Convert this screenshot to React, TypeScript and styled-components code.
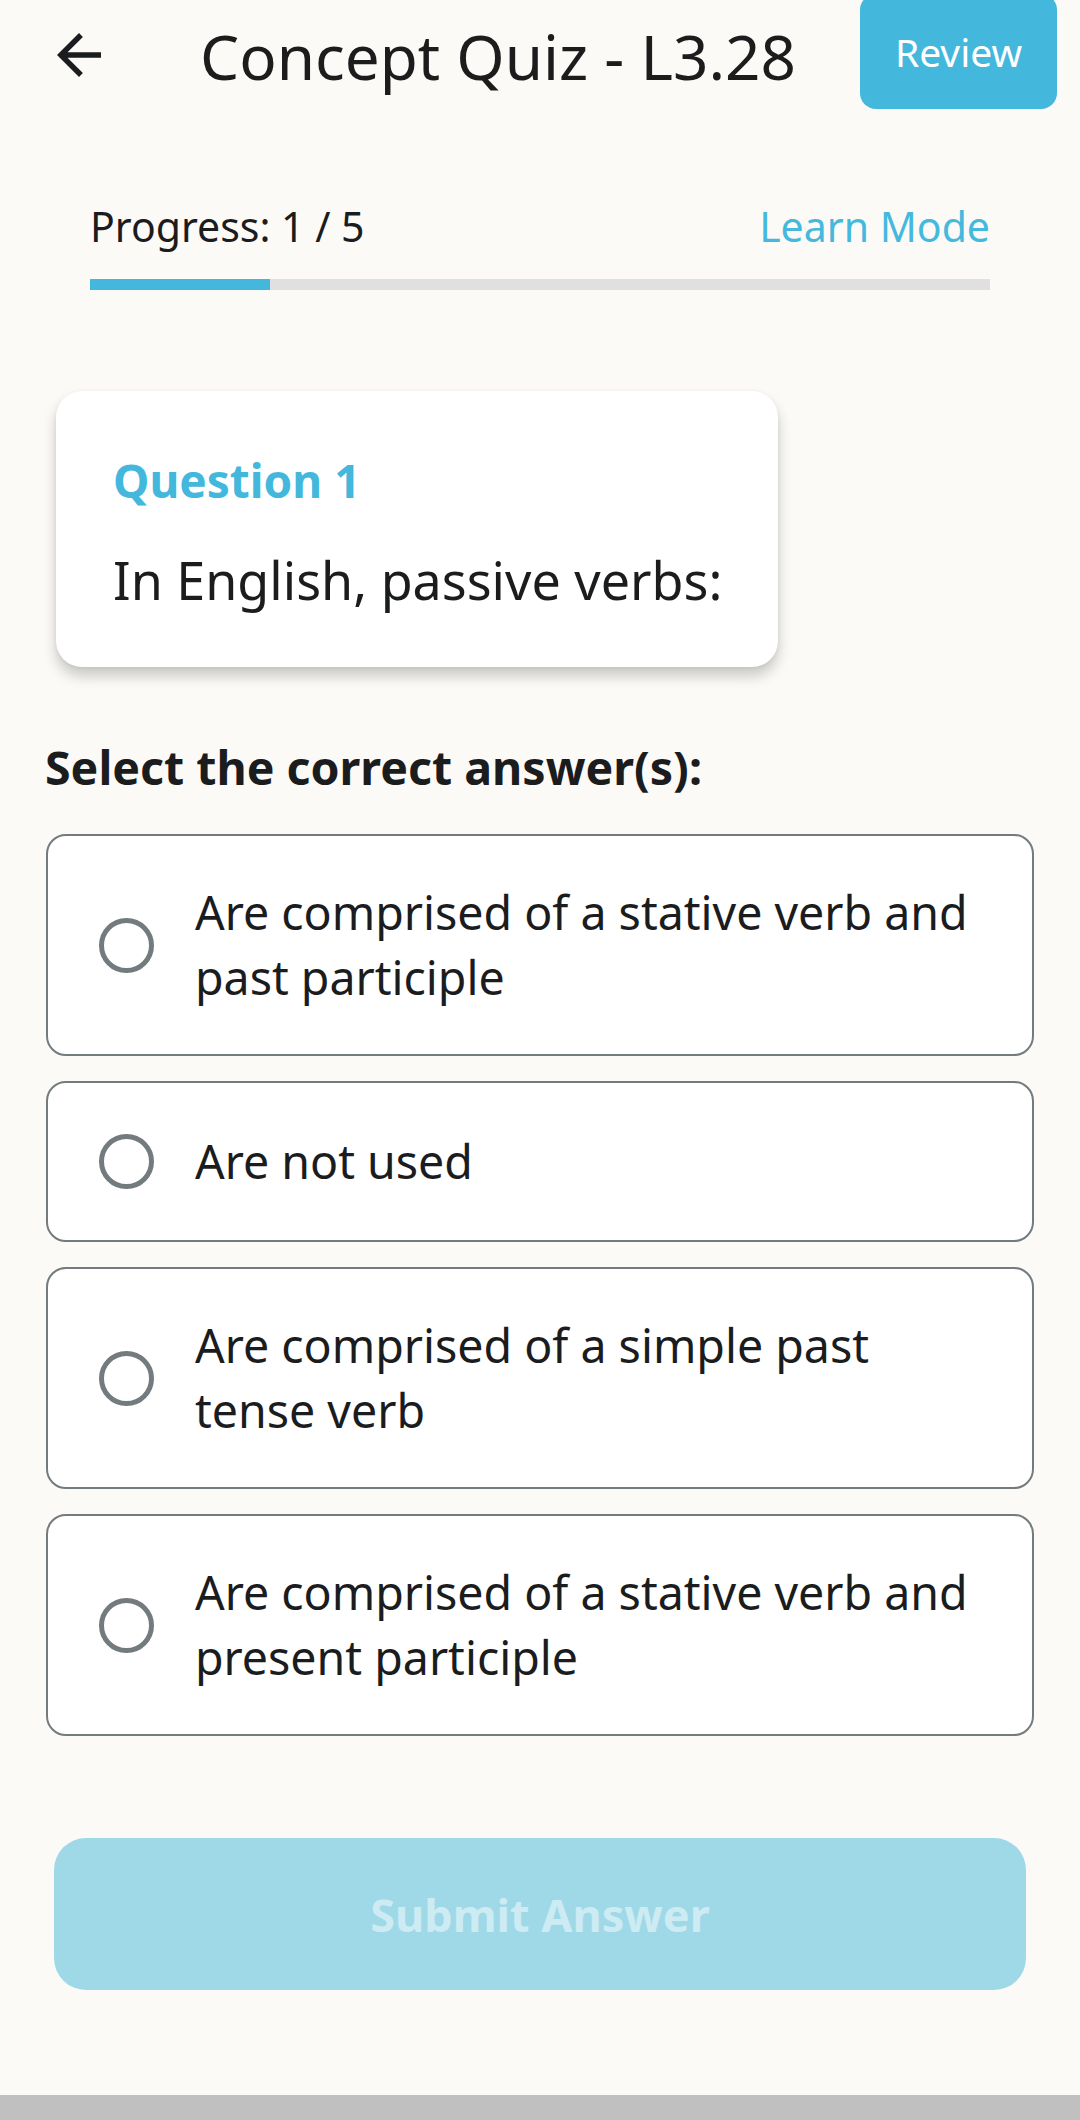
import React from "react";
import styled, { createGlobalStyle } from "styled-components";

const GlobalStyle = createGlobalStyle`
  html, body {
    margin: 0;
    padding: 0;
    background: #fbfaf6;
  }
  body {
    font-family: "Noto Sans", "Open Sans", sans-serif;
    color: #1b1c1e;
  }
  * { box-sizing: border-box; }
`;

const Page = styled.div`
  min-height: 2120px;
  display: flex;
  flex-direction: column;
  overflow: hidden;
`;

const Header = styled.header`
  height: 109px;
  display: flex;
  align-items: center;
  padding-left: 46px;
  padding-right: 23px;
`;

const BackButton = styled.button`
  width: 66px;
  height: 66px;
  padding: 0;
  border: none;
  background: transparent;
  display: flex;
  align-items: center;
  justify-content: center;
  color: #1b1c1e;
  flex-shrink: 0;
`;

const Title = styled.h1`
  flex: 1;
  margin: 0 0 0 88px;
  padding-top: 4px;
  font-size: 62px;
  font-weight: 400;
  line-height: 1.2;
  color: #1d1c1d;
  white-space: nowrap;
`;

const ReviewButton = styled.button`
  align-self: stretch;
  margin-top: -6px;
  width: 197px;
  border: none;
  border-radius: 16px;
  background: #43b8dc;
  color: #ffffff;
  font-family: "Noto Sans", sans-serif;
  font-size: 39px;
  font-weight: 400;
  padding: 0;
  flex-shrink: 0;
`;

const ProgressSection = styled.section`
  padding: 90px 90px 0;
`;

const ProgressRow = styled.div`
  display: flex;
  justify-content: space-between;
  align-items: baseline;
  font-size: 41px;
  line-height: 54px;
`;

const ProgressLabel = styled.span<{ $accent?: boolean }>`
  color: ${(p) => (p.$accent ? "#45b9dd" : "#1b1c1e")};
`;

const Track = styled.div`
  margin-top: 26px;
  height: 11px;
  background: #e0e0e0;
`;

const Fill = styled.div`
  height: 100%;
  background: #43b8dc;
`;

const QuestionCard = styled.div`
  align-self: flex-start;
  margin: 101px 0 0 56px;
  padding: 59px 56px 53px 57px;
  background: #ffffff;
  border-radius: 26px;
  box-shadow: 0 9px 14px rgba(0, 0, 0, 0.2), 0 1px 4px rgba(0, 0, 0, 0.06);
  display: flex;
  flex-direction: column;
  gap: 35px;
`;

const QuestionLabel = styled.div`
  font-size: 46px;
  font-weight: 700;
  line-height: 60px;
  color: #43b8dc;
`;

const QuestionText = styled.div`
  font-size: 52px;
  line-height: 69px;
  color: #1b1c1e;
  white-space: nowrap;
`;

const SelectHeading = styled.h2`
  margin: 70px 0 0 45px;
  font-size: 46.5px;
  font-weight: 700;
  line-height: 61px;
  color: #1b1c1e;
`;

const OptionList = styled.div`
  margin: 36px 46px 0;
  display: flex;
  flex-direction: column;
  gap: 25px;
`;

const Option = styled.label`
  display: flex;
  align-items: center;
  gap: 41px;
  padding: 44px 52px 44px 51px;
  background: #ffffff;
  border: 2px solid #737b7e;
  border-radius: 20px;
`;

const RadioSlot = styled.span`
  width: 55px;
  height: 69px;
  display: flex;
  align-items: center;
  flex-shrink: 0;
`;

const RadioCircle = styled.span`
  width: 55px;
  height: 55px;
  border: 5px solid #737b7e;
  border-radius: 50%;
`;

const OptionText = styled.span`
  font-size: 46.5px;
  line-height: 65px;
  color: #1b1c1e;
`;

const SubmitButton = styled.button`
  margin: 102px 54px 0;
  height: 152px;
  border: none;
  border-radius: 32px;
  background: #9fd9e8;
  color: #cdebf3;
  font-family: "Noto Sans", sans-serif;
  font-size: 45px;
  font-weight: 700;
`;

const BottomBar = styled.div`
  margin-top: auto;
  height: 25px;
  background: #c0c0c0;
`;

const options = [
  "Are comprised of a stative verb and past participle",
  "Are not used",
  "Are comprised of a simple past tense verb",
  "Are comprised of a stative verb and present participle",
];

const ArrowBack = () => (
  <svg width="66" height="66" viewBox="0 0 24 24" fill="currentColor">
    <path d="M20 11H7.83l5.59-5.59L12 4l-8 8 8 8 1.41-1.41L7.83 13H20v-2z" />
  </svg>
);

export default function App() {
  const progress = 1 / 5;
  return (
    <>
      <GlobalStyle />
      <Page>
        <Header>
          <BackButton aria-label="Back">
            <ArrowBack />
          </BackButton>
          <Title>Concept Quiz - L3.28</Title>
          <ReviewButton>Review</ReviewButton>
        </Header>

        <ProgressSection>
          <ProgressRow>
            <ProgressLabel>Progress: 1 / 5</ProgressLabel>
            <ProgressLabel $accent>Learn Mode</ProgressLabel>
          </ProgressRow>
          <Track>
            <Fill style={{ width: `${progress * 100}%` }} />
          </Track>
        </ProgressSection>

        <QuestionCard>
          <QuestionLabel>Question 1</QuestionLabel>
          <QuestionText>In English, passive verbs:</QuestionText>
        </QuestionCard>

        <SelectHeading>Select the correct answer(s):</SelectHeading>

        <OptionList>
          {options.map((o) => (
            <Option key={o}>
              <RadioSlot>
                <RadioCircle />
              </RadioSlot>
              <OptionText>{o}</OptionText>
            </Option>
          ))}
        </OptionList>

        <SubmitButton disabled>Submit Answer</SubmitButton>

        <BottomBar />
      </Page>
    </>
  );
}
